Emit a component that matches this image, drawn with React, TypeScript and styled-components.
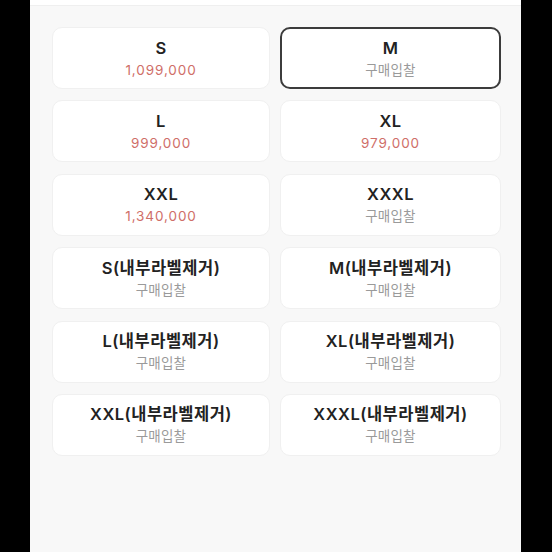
import styled, { createGlobalStyle } from 'styled-components'

const GlobalStyle = createGlobalStyle`
  html, body {
    margin: 0;
    padding: 0;
    background: #000;
  }
  body {
    font-family: Inter, "Noto Sans CJK KR", sans-serif;
  }
`

const Frame = styled.div`
  display: flex;
  justify-content: center;
  width: 552px;
  height: 552px;
  background: #000;
  padding-left: 30px;
  padding-right: 31px;
  box-sizing: border-box;
`
const Screen = styled.div`
  flex: 1;
  display: flex;
  flex-direction: column;
  background: #f8f8f8;
`
const TopBar = styled.div`
  height: 5px;
  background: #fff;
  border-bottom: 1px solid #efefef;
`
const Grid = styled.div`
  display: grid;
  grid-template-columns: 218px 221px;
  grid-auto-rows: 62px;
  column-gap: 10px;
  row-gap: 11.4px;
  padding: 21px 0 0 22px;
`
const Card = styled.div<{ $selected?: boolean }>`
  display: flex;
  flex-direction: column;
  align-items: center;
  justify-content: center;
  gap: 3px;
  background: #fff;
  border-radius: 10px;
  box-sizing: border-box;
  border: ${p => (p.$selected ? '2px solid #3c3c3c' : '1px solid #f0f0f0')};
`
const Size = styled.div`
  font-size: 16.5px;
  line-height: 20px;
  font-weight: 600;
  letter-spacing: 0.5px;
  color: #222;
`
const Sub = styled.div<{ $price?: boolean }>`
  font-size: 13.5px;
  line-height: 18px;
  letter-spacing: ${p => (p.$price ? '0.9px' : '0.2px')};
  color: ${p => (p.$price ? '#cf6e68' : '#9a9a9a')};
`

const items = [
  { size: 'S', price: '1,099,000' },
  { size: 'M', selected: true },
  { size: 'L', price: '999,000' },
  { size: 'XL', price: '979,000' },
  { size: 'XXL', price: '1,340,000' },
  { size: 'XXXL' },
  { size: 'S(내부라벨제거)' },
  { size: 'M(내부라벨제거)' },
  { size: 'L(내부라벨제거)' },
  { size: 'XL(내부라벨제거)' },
  { size: 'XXL(내부라벨제거)' },
  { size: 'XXXL(내부라벨제거)' },
]

function App() {
  return (
    <Frame>
      <GlobalStyle />
      <Screen>
        <TopBar />
        <Grid>
          {items.map(item => (
            <Card key={item.size} $selected={item.selected}>
              <Size>{item.size}</Size>
              <Sub $price={!!item.price}>{item.price ?? '구매입찰'}</Sub>
            </Card>
          ))}
        </Grid>
      </Screen>
    </Frame>
  )
}

export default App
